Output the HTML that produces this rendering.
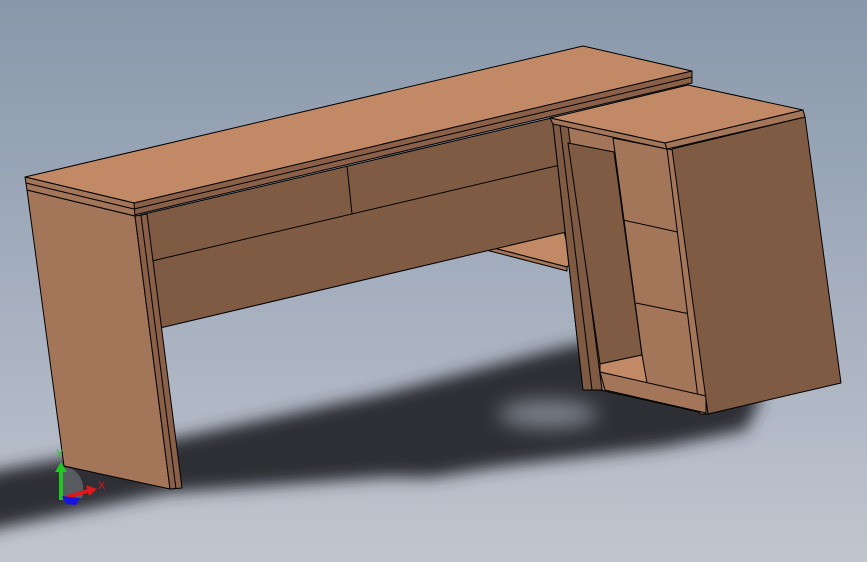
<!DOCTYPE html>
<html><head><meta charset="utf-8"><style>
html,body{margin:0;padding:0;width:867px;height:562px;overflow:hidden}
svg{display:block}
</style></head><body>
<svg width="867" height="562" viewBox="0 0 867 562" xmlns="http://www.w3.org/2000/svg">
<defs>
<linearGradient id="bg" x1="0" y1="0" x2="0" y2="1">
<stop offset="0" stop-color="#8898aa"/>
<stop offset="0.5" stop-color="#a4aebe"/>
<stop offset="1" stop-color="#c1c5cf"/>
</linearGradient>
<filter id="bl" x="-20%" y="-50%" width="140%" height="200%"><feGaussianBlur stdDeviation="8"/></filter>
<filter id="bl2" x="-50%" y="-100%" width="200%" height="300%"><feGaussianBlur stdDeviation="10"/></filter>
</defs>
<rect width="867" height="562" fill="url(#bg)"/>
<g filter="url(#bl)">
<polygon fill="#2d2f34" points="-60,485 0,470 182,437 387,393 552,350 640,330 740,335 760,400 746,430 663,447 497,467 430,478 387,477 166,493 0,528 -60,545"/>
</g>
<ellipse cx="548" cy="414" rx="50" ry="14" fill="#7c818a" filter="url(#bl2)"/>
<g stroke="#000" stroke-width="1" stroke-linejoin="round">
<polygon fill="#c28966" points="486,246 563,228 572,262 567,267"/>
<polygon fill="#a47659" points="486,246 567,267 567,271 486,250"/>
<polygon fill="#7f5b43" points="140,215 560,116 575,230 160,328"/>
<line x1="152" y1="261" x2="560" y2="165"/>
<line x1="347" y1="166" x2="352" y2="214"/>
<polygon fill="#a47659" points="27,190 135,216 170,489 64,466"/>
<polygon fill="#8a6049" points="135,216 147,214 182,488 170,489"/>
<line x1="141" y1="215" x2="176" y2="489"/>
<polygon fill="#c28966" points="25,177 583,46 692,71 134,203"/>
<polygon fill="#8a6049" points="134,203 692,71 692,83 134,215"/>
<line x1="134" y1="209" x2="692" y2="77"/>
<polygon fill="#a47659" points="25,177 134,203 135,216 27,190"/>
<line x1="26" y1="183" x2="134" y2="209"/>
<polygon fill="#a47659" points="553,124 672,150 708,414 600,390 583,390"/>
<polygon fill="#7f5b43" points="553,124 568,126 602,390 583,390"/>
<line x1="560" y1="125" x2="592" y2="390"/>
<polygon fill="#7f5b43" points="568,143 614,152 642,355 600,364"/>
<polygon fill="#a47659" points="613,138 667,149 705,396 646,384"/>
<line x1="623" y1="220" x2="682" y2="233"/>
<line x1="636" y1="303" x2="695" y2="315"/>
<polygon fill="#a47659" points="667,149 675,150 709,414 700,414"/>
<polygon fill="#c28966" points="600,364 642,355 647,383 600,372"/>
<polygon fill="#a47659" points="600,372 706,396 706,413 605,390"/>
<polygon fill="#7f5b43" points="672,149 805,117 841,383 708,414"/>
<polygon fill="#c28966" points="550,118 688,85 803,110 665,143"/>
<polygon fill="#a47659" points="550,118 665,143 667,149 553,124"/>
<polygon fill="#a47659" points="665,143 803,110 805,117 667,149"/>
</g>
<path d="M62,468 A18,22 0 0 1 82,498 L62,498 Z" fill="#6a6d72" opacity="0.7"/>
<line x1="61" y1="500" x2="61" y2="470" stroke="#1ec81e" stroke-width="4"/>
<polygon points="55,472 61,462 67,472" fill="#1ec81e"/>
<text x="56" y="457" font-family="Liberation Sans, sans-serif" font-size="11" fill="#1ec81e">Y</text>
<line x1="64" y1="498" x2="88" y2="491" stroke="#e01818" stroke-width="4"/>
<polygon points="86,485 97,489 89,496" fill="#e01818"/>
<text x="98" y="489" font-family="Liberation Sans, sans-serif" font-size="11" fill="#e01818">X</text>
<polygon points="62,496 80,498 76,505 66,504" fill="#1414e0"/>
</svg>
</body></html>
